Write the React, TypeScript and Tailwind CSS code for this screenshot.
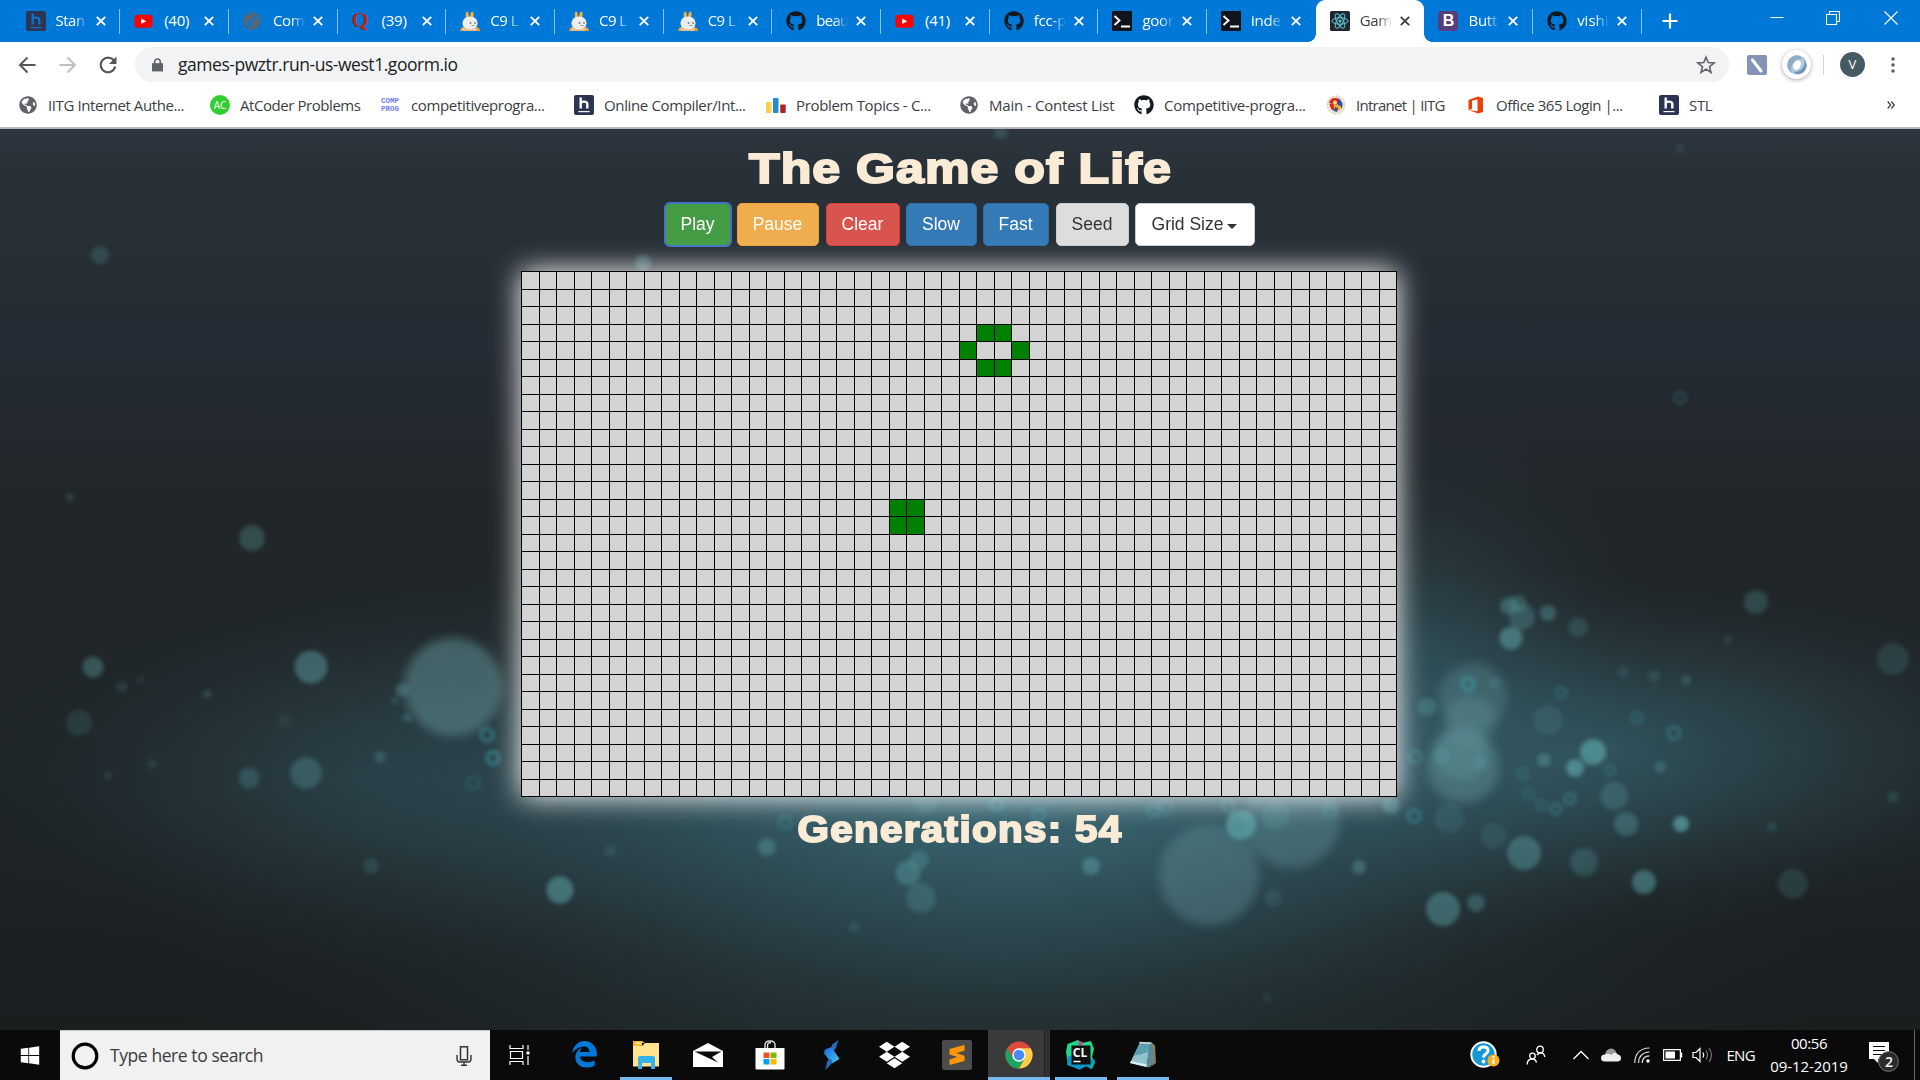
import { useLayoutEffect, useRef } from 'react';
import type { ReactNode } from 'react';
import { FaGithub, FaDropbox, FaWindows, FaGlobeAmericas } from 'react-icons/fa';

/* Text whose tracking is adjusted so that the run is `width` pixels wide. */
function FitText({ text, width, className = '' }: { text: string; width: number; className?: string }) {
  const ref = useRef<HTMLSpanElement>(null);
  useLayoutEffect(() => {
    const el = ref.current;
    if (!el) return;
    el.style.letterSpacing = '0px';
    const natural = el.offsetWidth;
    el.style.letterSpacing = `${(width - natural) / text.length}px`;
  }, [text, width]);
  return (
    <span ref={ref} className={`inline-block whitespace-pre ${className}`}>
      {text}
    </span>
  );
}

/* ---------- favicons ---------- */

const HackerEarth = () => (
  <svg viewBox="0 0 20 20" className="h-5 w-5">
    <rect width="20" height="20" rx="2" fill="#2c3454" />
    <path d="M6.700 2.500v11M6.700 9q0-2.400 3.300-2.400t3.300 2.400v4.500" fill="none" stroke="#fff" strokeWidth="2.400" />
    <path d="M4.500 16.600h11" stroke="#fff" strokeWidth="1.200" />
  </svg>
);
const HackerEarthDim = () => (
  <svg viewBox="0 0 20 20" className="h-5 w-5">
    <rect width="20" height="20" rx="2" fill="#2c3454" />
    <path d="M6.700 2.500v11M6.700 9q0-2.400 3.300-2.400t3.300 2.400v4.500" fill="none" stroke="#0c70c4" strokeWidth="2.400" />
    <path d="M4.500 16.600h11" stroke="#0c70c4" strokeWidth="1.200" />
  </svg>
);
const YouTube = () => (
  <svg viewBox="0 0 20 20" className="h-5 w-5">
    <rect x="0.500" y="3.700" width="18" height="13" rx="3" fill="#f00" />
    <path d="M7.200 7.400v5.600l5-2.800z" fill="#fff" />
  </svg>
);
const GlobeDim = () => (
  <svg viewBox="0 0 20 20" className="h-5 w-5">
    <circle cx="9" cy="10" r="8" fill="#2b6da8" stroke="#5d6670" strokeWidth="1.600" />
    <path d="M5 4.500q5-2 6 0l-2 3-3 1-1 3-3-1q0-4 3-6zM10 11l4-2 3 1-2 5-4 2-1-2z" fill="#5d6670" />
  </svg>
);
const GlobeGray = () => <FaGlobeAmericas className="ml-px h-[18px] w-[18px] text-[#5f6368]" />;
const Quora = () => (
  <span className="block h-5 w-5 font-['Liberation_Serif'] text-[22px] leading-[18px] font-bold text-[#b3261e]">Q</span>
);
const Rabbit = () => (
  <svg viewBox="0 0 20 20" className="h-5 w-5">
    <path d="M0 20q1-5 6-4l9 0q5 0 5 4z" fill="#f0a030" />
    <path d="M7 .5q2 0 2 7h-3q-1-6 1-7zM12.500 .5q2 1 .5 7h-3q0-7 2.500-7z" fill="#f5b040" />
    <ellipse cx="10" cy="12" rx="7.600" ry="6.600" fill="#eee" />
    <path d="M2 17q8 3.500 15 0l-1 2.500H3z" fill="#d8d4d0" />
    <circle cx="10.500" cy="12" r=".9" fill="#777" />
    <circle cx="15" cy="12" r=".9" fill="#777" />
    <path d="M11.500 14.500h3" stroke="#999" strokeWidth="1" />
  </svg>
);
const GitHub = () => <FaGithub className="h-5 w-5 text-[#14191f]" />;
const Terminal = () => (
  <svg viewBox="0 0 20 20" className="h-5 w-5">
    <rect width="20" height="20" rx="1" fill="#10151d" />
    <path d="M2.500 5l5 4.500-5 4.500M9 15.500h9" fill="none" stroke="#fff" strokeWidth="1.900" />
  </svg>
);
const ReactIcon = () => (
  <svg viewBox="0 0 20 20" className="h-5 w-5">
    <rect width="20" height="20" rx="1.500" fill="#20262b" />
    <g fill="none" stroke="#5fc9dd" strokeWidth="1">
      <ellipse cx="10" cy="10" rx="8" ry="3.200" />
      <ellipse cx="10" cy="10" rx="8" ry="3.200" transform="rotate(60 10 10)" />
      <ellipse cx="10" cy="10" rx="8" ry="3.200" transform="rotate(120 10 10)" />
    </g>
    <circle cx="10" cy="10" r="1.500" fill="#5fc9dd" />
  </svg>
);
const Bootstrap = () => (
  <span className="flex h-5 w-5 items-center justify-center rounded-[4px] bg-[#563d7c] font-['Liberation_Sans'] text-[16px] leading-none font-bold text-white">
    B
  </span>
);

type Tab = { title: string; width: number; icon: () => ReactNode; active?: boolean; noSep?: boolean };

const tabs: Tab[] = [
  { title: 'Stan', width: 29, icon: HackerEarthDim },
  { title: '(40)', width: 25, icon: YouTube },
  { title: 'Com', width: 31, icon: GlobeDim },
  { title: '(39)', width: 25, icon: Quora },
  { title: 'C9 L', width: 28, icon: Rabbit },
  { title: 'C9 L', width: 28, icon: Rabbit },
  { title: 'C9 L', width: 28, icon: Rabbit },
  { title: 'beau', width: 32, icon: GitHub },
  { title: '(41)', width: 25, icon: YouTube },
  { title: 'fcc-p', width: 32, icon: GitHub },
  { title: 'goor', width: 31, icon: Terminal },
  { title: 'inde', width: 30, icon: Terminal, noSep: true },
  { title: 'Gam', width: 32, icon: ReactIcon, active: true, noSep: true },
  { title: 'Butt', width: 29, icon: Bootstrap },
  { title: 'vishi', width: 31, icon: GitHub },
];

function TabItem({ tab }: { tab: Tab }) {
  const Icon = tab.icon;
  return (
    <div
      className={`relative flex h-[42px] w-[108.7px] shrink-0 items-center pl-3.5 ${
        tab.active ? 'rounded-t-[9px] bg-white text-[#3c4043]' : 'text-white'
      }`}
    >
      <Icon />
      <div
        className={`-mt-px ml-2.5 w-[36px] text-[15px] ${
          tab.title.startsWith('(') ? '' : '[mask-image:linear-gradient(to_right,#000_50%,transparent_90%)]'
        }`}
      >
        <FitText text={tab.title} width={tab.width} />
      </div>
      <svg viewBox="0 0 10 10" className="ml-[4px] h-[10px] w-[10px]">
        <path d="M.8.8l8.400 8.400M9.200.8L.8 9.200" stroke="currentColor" strokeWidth="1.900" />
      </svg>
      {!tab.noSep && <span className="absolute top-[9px] right-0 h-[25px] w-px bg-[#8cc2ef]" />}
      {tab.active && (
        <>
          <span className="absolute bottom-0 -left-2 h-2 w-2 bg-[radial-gradient(circle_at_0_0,transparent_7.500px,#fff_8px)]" />
          <span className="absolute -right-2 bottom-0 h-2 w-2 bg-[radial-gradient(circle_at_100%_0,transparent_7.500px,#fff_8px)]" />
        </>
      )}
    </div>
  );
}

function TabStrip() {
  return (
    <div className="flex h-[42px] items-center bg-[#0078d7] pl-[11.500px] text-white">
      {tabs.map((t, i) => (
        <TabItem key={i} tab={t} />
      ))}
      <svg viewBox="0 0 16 16" className="ml-5 h-4 w-4">
        <path d="M8 .5v15M.5 8h15" stroke="#fff" strokeWidth="2.200" />
      </svg>
      <div className="mr-[22px] ml-auto flex items-center gap-[42px] self-start pt-[11px]">
        <svg viewBox="0 0 14 14" className="h-3.5 w-3.5">
          <path d="M.5 6.500h13" stroke="#fff" />
        </svg>
        <svg viewBox="0 0 14 14" className="mr-0.5 h-3.5 w-3.5">
          <path d="M.5 3.500h10v10h-10zM3.500 3.500v-3h10v10h-3" fill="none" stroke="#fff" strokeWidth="1.100" />
        </svg>
        <svg viewBox="0 0 14 14" className="h-3.5 w-3.5">
          <path d="M.5.5l13 13M13.500.5l-13 13" stroke="#fff" strokeWidth="1.200" />
        </svg>
      </div>
    </div>
  );
}

function Toolbar() {
  return (
    <div className="flex h-[45px] items-center bg-white pl-[18px]">
      <svg viewBox="0 0 18 18" className="h-[18px] w-[18px]">
        <path d="M9.500 1.500L2 9l7.500 7.500M2 9h15.500" fill="none" stroke="#54585d" strokeWidth="2" />
      </svg>
      <svg viewBox="0 0 18 18" className="ml-[23px] h-[18px] w-[18px]">
        <path d="M8.500 1.500L16 9l-7.500 7.500M16 9H.5" fill="none" stroke="#bdc0c4" strokeWidth="2" />
      </svg>
      <svg viewBox="0 0 18 18" className="ml-[22px] h-[18px] w-[18px]">
        <path d="M15.200 5A7.300 7.300 0 1 0 16.200 10.500" fill="none" stroke="#54585d" strokeWidth="2.100" />
        <path d="M17.500 0.500v7.500h-7.500z" fill="#54585d" />
      </svg>
      <div className="ml-[18px] flex h-[35px] w-[1594px] items-center rounded-full bg-[#f1f3f4] pl-[17px] text-[17.5px] text-[#202124]">
        <svg viewBox="0 0 12 14" className="h-[14px] w-[11px]">
          <path d="M0 5h12v9H0z" fill="#5f6368" />
          <path d="M3 5.500V3.500a3 3 0 0 1 6 0v2" fill="none" stroke="#5f6368" strokeWidth="1.700" />
        </svg>
        <FitText text="games-pwztr.run-us-west1.goorm.io" width={280} className="ml-[15px]" />
        <svg viewBox="0 0 20 20" className="mr-[13px] ml-auto h-5 w-5">
          <path
            d="M10 2.200l2.200 5.400 5.800.4-4.500 3.700 1.500 5.700-5-3.200-5 3.200 1.500-5.700L2 8l5.800-.4z"
            fill="none"
            stroke="#5f6368"
            strokeWidth="1.600"
          />
        </svg>
      </div>
      <svg viewBox="0 0 20 20" className="ml-[18px] h-5 w-5">
        <rect width="20" height="20" rx="2" fill="#8394b8" />
        <path d="M5.500 5l8.500 11" stroke="#fff" strokeWidth="3" strokeLinecap="round" />
      </svg>
      <div className="ml-[15px] flex h-[29px] w-[29px] items-center justify-center rounded-full bg-white shadow-[0_1px_4px_rgba(0,0,0,0.35)]">
        <svg viewBox="0 0 20 20" className="h-5 w-5">
          <circle cx="10" cy="10" r="9.700" fill="#b4c9de" />
          <path d="M10 .3a9.700 9.700 0 0 0-5 18q-3-8 5-13.500Q13 3 16 4q-2.500-3.700-6-3.700z" fill="#8eabc8" />
          <path d="M15.500 2Q20 8 15 14q-4 4-9 2.500 4 4 9 1.800 5-3.300 4.500-9Q19 5 15.500 2z" fill="#6f94b9" />
          <ellipse cx="10" cy="10" rx="3.600" ry="5" fill="#fff" transform="rotate(25 10 10)" />
        </svg>
      </div>
      <span className="ml-[12px] h-5 w-px bg-[#d0d3d6]" />
      <span className="ml-[16px] flex h-[25px] w-[25px] items-center justify-center rounded-full bg-[#455a64] text-[13px] text-white">
        V
      </span>
      <svg viewBox="0 0 4 16" className="ml-[26px] h-4 w-1">
        <circle cx="2" cy="2" r="1.800" fill="#5f6368" />
        <circle cx="2" cy="8" r="1.800" fill="#5f6368" />
        <circle cx="2" cy="14" r="1.800" fill="#5f6368" />
      </svg>
    </div>
  );
}

const AtCoder = () => (
  <span className="flex h-5 w-5 items-center justify-center rounded-full bg-[#32cd32] text-[10px] text-white">AC</span>
);
const CompProg = () => (
  <span className="flex w-5 flex-col font-['Liberation_Mono'] text-[7.5px] leading-[8px] font-bold text-[#6f7df2]">
    <span>COMP</span>
    <span>PROG</span>
  </span>
);
const Codeforces = () => (
  <svg viewBox="0 0 20 20" className="h-5 w-5">
    <rect x="0" y="7" width="5.500" height="11" rx="1" fill="#f8cf4f" />
    <rect x="7" y="3" width="5.500" height="15" rx="1" fill="#1f8dd0" />
    <rect x="14.200" y="9.500" width="5.500" height="8.500" rx="1" fill="#b21f24" />
  </svg>
);
const Iitg = () => (
  <svg viewBox="0 0 20 20" className="h-5 w-5">
    <circle cx="10" cy="10" r="9" fill="#eee5cf" stroke="#c9c4b8" strokeDasharray="2 1.500" />
    <path d="M3 8q1-5 6-5 6 0 6 5l-5 2z" fill="#d6281f" />
    <path d="M12 3.500q6 3 4 10l-4-2z" fill="#2b4fa8" />
    <path d="M7 9l8 2q1 4-4 5-4 0-4-7z" fill="#f0b428" />
    <path d="M3.500 9l4 0 1 7q-4-1-5-7z" fill="#d6281f" />
    <path d="M9 12l3 1-1 4-3-1z" fill="#2b4fa8" />
    <circle cx="9" cy="7.500" r="2" fill="#f6dc88" />
  </svg>
);
const Office = () => (
  <svg viewBox="0 0 20 20" className="h-5 w-5">
    <path d="M2.500 5L12 1.400l5 1.500v14.200l-5 1.500L2.500 15l9 1.200V4.400L6 5.800v8l-3.500 1.400z" fill="#e8420c" />
  </svg>
);

const bookmarks: { text: string; width: number; slot: string; icon: () => ReactNode }[] = [
  { text: 'IITG Internet Authe...', width: 136, slot: 'w-[192px]', icon: GlobeGray },
  { text: 'AtCoder Problems', width: 121, slot: 'w-[171px]', icon: AtCoder },
  { text: 'competitiveprogra...', width: 134, slot: 'w-[193px]', icon: CompProg },
  { text: 'Online Compiler/Int...', width: 142, slot: 'w-[192px]', icon: HackerEarth },
  { text: 'Problem Topics - C...', width: 135, slot: 'w-[193px]', icon: Codeforces },
  { text: 'Main - Contest List', width: 125, slot: 'w-[175px]', icon: GlobeGray },
  { text: 'Competitive-progra...', width: 142, slot: 'w-[192px]', icon: GitHub },
  { text: 'Intranet | IITG', width: 89, slot: 'w-[140px]', icon: Iitg },
  { text: 'Office 365 Login |...', width: 127, slot: 'w-[193px]', icon: Office },
  { text: 'STL', width: 23, slot: 'w-[60px]', icon: HackerEarth },
];

function BookmarksBar() {
  return (
    <div className="flex h-[42px] items-center border-b-2 border-[#b5b8bb] bg-white pb-1 pl-[18px] text-[15px] text-[#3c4043]">
      {bookmarks.map((b, i) => {
        const Icon = b.icon;
        return (
          <div key={i} className={`flex shrink-0 items-center ${b.slot}`}>
            <span className="flex w-[30px] shrink-0">
              <Icon />
            </span>
            <FitText text={b.text} width={b.width} />
          </div>
        );
      })}
      <svg viewBox="0 0 8 8" className="mr-[25px] ml-auto h-2 w-2">
        <path d="M.7.5L3.600 4 .7 7.500M4.300.5L7.200 4 4.300 7.500" fill="none" stroke="#4a4d51" strokeWidth="1.400" />
      </svg>
    </div>
  );
}

/* ---------- bokeh backdrop: [cx, cy, r, opacity] ---------- */

const discs: [number, number, number, number][] = [
  [1509, 606, 9, 0.5], [1518, 604, 9, 0.4], [1522, 617, 13, 0.4], [1511, 638, 11.5, 0.7], [1548, 613, 8, 0.5],
  [1578, 627, 10, 0.28], [1756, 602, 12, 0.35], [1728, 640, 5, 0.18], [1893, 659, 16, 0.25], [1427, 707, 9.5, 0.4],
  [1548, 720, 15, 0.2], [1593, 752, 13, 0.85], [1575, 768, 9, 0.85], [1544, 760, 7, 0.5], [1660, 767, 6, 0.4],
  [1614, 796, 14, 0.35], [1626, 824, 12, 0.45], [1681, 824, 8, 0.9], [1772, 827, 5, 0.25], [1893, 797, 6, 0.25],
  [1449, 818, 15, 0.2], [1494, 836, 13, 0.2], [1524, 853, 17, 0.55], [1584, 862, 14, 0.35], [1644, 882, 12, 0.65],
  [1793, 884, 15, 0.25], [1443, 909, 17, 0.6], [1476, 903, 9, 0.45], [1391, 805, 9, 0.6], [1686, 680, 5, 0.35],
  [1654, 676, 6, 0.25], [1623, 672, 6, 0.2], [1495, 683, 6, 0.25], [70, 497, 4, 0.3], [252, 538, 13, 0.4],
  [93, 667, 10.5, 0.5], [311, 667, 16.5, 0.6], [79, 723, 13, 0.22], [402, 690, 7, 0.45], [395, 701, 4, 0.3],
  [407, 718, 5, 0.35], [306, 773, 16, 0.4], [249, 778, 10.5, 0.35], [380, 757, 6, 0.35], [207, 694, 4, 0.35],
  [122, 687, 6, 0.2], [141, 680, 5, 0.12], [152, 764, 5, 0.2], [108, 775, 4, 0.2], [371, 866, 8, 0.25],
  [560, 890, 13.5, 0.7], [610, 851, 6, 0.2], [767, 847, 9, 0.5], [285, 720, 7, 0.12], [1241, 825, 15, 0.9],
  [1091, 866, 9, 0.6], [1359, 867, 7, 0.5], [1273, 898, 9, 0.2], [908, 873, 12.5, 0.5], [919, 860, 10, 0.4],
  [921, 898, 15, 0.35], [854, 927, 6, 0.2], [1267, 998, 5, 0.15], [100, 255, 9, 0.3], [1680, 149, 4, 0.2],
  [1001, 132, 7, 0.3], [643, 263, 8, 0.5], [1480, 763, 7, 0.3], [1442, 756, 8, 0.3], [1276, 816, 14, 0.3],
  [925, 802, 12, 0.25],
];

const rings: [number, number, number, number][] = [
  [1468, 684, 6, 0.8], [1561, 693, 5, 0.4], [1637, 718, 5, 0.4], [1674, 733, 6, 0.55], [1523, 774, 5, 0.35],
  [1529, 794, 5, 0.3], [1541, 805, 5, 0.35], [1556, 809, 5, 0.5], [1570, 799, 5, 0.55], [1610, 770, 5, 0.35],
  [1414, 816, 6, 0.6], [1415, 757, 6, 0.5], [487, 735, 6, 0.7], [493, 758, 6, 0.8], [473, 783, 6, 0.3],
  [1680, 398, 5, 0.35], [1039, 815, 6, 0.5], [997, 804, 6, 0.6], [1154, 810, 6, 0.5], [1166, 807, 6, 0.4],
  [785, 822, 6, 0.4], [1330, 811, 6, 0.4], [1228, 806, 6, 0.5], [1004, 828, 5, 0.5],
];

function Backdrop() {
  return (
    <svg viewBox="0 129 1920 901" preserveAspectRatio="none" className="absolute inset-0 h-full w-full">
      <defs>
        <linearGradient id="base" x1="0" y1="0" x2="0" y2="1">
          <stop offset="0" stopColor="#2d363e" />
          <stop offset="0.05" stopColor="#283138" />
          <stop offset="0.25" stopColor="#252b34" />
          <stop offset="0.42" stopColor="#212629" />
          <stop offset="0.75" stopColor="#1e2427" />
          <stop offset="1" stopColor="#1b1e1f" />
        </linearGradient>
        <radialGradient id="glow">
          <stop offset="0" stopColor="#478d9f" stopOpacity="0.75" />
          <stop offset="0.3" stopColor="#43808f" stopOpacity="0.58" />
          <stop offset="0.55" stopColor="#3e7280" stopOpacity="0.34" />
          <stop offset="0.8" stopColor="#376773" stopOpacity="0.1" />
          <stop offset="1" stopColor="#2c5560" stopOpacity="0" />
        </radialGradient>
        <filter id="soft" x="-10%" y="-10%" width="120%" height="120%">
          <feGaussianBlur stdDeviation="2.300" />
        </filter>
        <filter id="softer" x="-10%" y="-30%" width="120%" height="160%">
          <feGaussianBlur stdDeviation="5" />
        </filter>
      </defs>
      <rect y="129" width="1920" height="901" fill="url(#base)" />
      <ellipse cx="980" cy="770" rx="960" ry="250" fill="url(#glow)" opacity="0.55" />
      <ellipse cx="1030" cy="795" rx="700" ry="210" fill="url(#glow)" opacity="0.6" />
      <ellipse cx="1600" cy="750" rx="520" ry="180" fill="url(#glow)" opacity="0.5" />
      <ellipse cx="370" cy="780" rx="420" ry="200" fill="url(#glow)" opacity="0.25" />
      <ellipse cx="1000" cy="960" rx="850" ry="260" fill="url(#glow)" opacity="0.3" />
      <ellipse cx="1400" cy="640" rx="260" ry="230" fill="url(#glow)" opacity="0.35" />
      <g filter="url(#softer)" fill="#62949a">
        <circle cx="453" cy="687" r="49" opacity="0.5" />
        <circle cx="1209" cy="875" r="50" opacity="0.38" />
        <circle cx="1292" cy="820" r="48" opacity="0.38" />
        <circle cx="1473" cy="697" r="34" opacity="0.33" />
        <circle cx="1470" cy="722" r="26" opacity="0.3" />
        <circle cx="1463" cy="767" r="36" opacity="0.45" />
        <circle cx="1461" cy="752" r="28" opacity="0.4" />
      </g>
      <g filter="url(#soft)" opacity="0.75">
        {discs.map(([x, y, r, o], i) => (
          <circle key={i} cx={x} cy={y} r={r} fill="#5fa9ad" opacity={o} />
        ))}
        {rings.map(([x, y, r, o], i) => (
          <circle key={i} cx={x} cy={y} r={r} fill="none" stroke="#3fa3ae" strokeWidth="3.500" opacity={o} />
        ))}
      </g>
    </svg>
  );
}

const COLS = 50;
const ROWS = 30;
const alive = new Set(['3-26', '3-27', '4-25', '4-28', '5-26', '5-27', '13-21', '13-22', '14-21', '14-22']);

function Board() {
  return (
    <div className="mt-[25px] mr-[2px] grid h-[526px] w-[876px] grid-cols-[repeat(50,17.5px)] grid-rows-[repeat(30,17.5px)] border-r border-b border-black bg-[#d3d3d3] shadow-[0_0_27px_#fff]">
      {Array.from({ length: ROWS * COLS }, (_, i) => {
        const on = alive.has(`${Math.floor(i / COLS)}-${i % COLS}`);
        return <div key={i} className={`border-t border-l border-black ${on ? 'bg-[#008000]' : ''}`} />;
      })}
    </div>
  );
}

function Game() {
  const btn = 'flex h-[43px] items-center justify-center rounded-[5px] border';
  const heading = "flex items-center font-['Liberation_Sans'] leading-none font-bold text-[#faebd7]";
  return (
    <main className="relative h-[901px] overflow-hidden bg-[#1d2225]">
      <Backdrop />
      <div className="relative flex flex-col items-center">
        <h1 className={`${heading} mt-[11px] h-[56px] text-[43px]`}>
          <FitText
            text="The Game of Life"
            width={363}
            className="scale-x-[1.165] [-webkit-text-stroke:2px_#faebd7]"
          />
        </h1>
        <div className="mt-[7px] mr-px flex font-['Liberation_Sans'] text-[17.5px] text-white">
          <button className={`${btn} w-[66px] border-[#2c6a2c] bg-[#449d44] outline-2 -outline-offset-1 outline-[#3f74c8]`}>Play</button>
          <button className={`${btn} ml-[6px] w-[82px] border-[#eea236] bg-[#f0ad4e]`}>Pause</button>
          <button className={`${btn} ml-[7px] w-[74px] border-[#d43f3a] bg-[#d9534f]`}>Clear</button>
          <button className={`${btn} ml-[6px] w-[71px] border-[#2e6da4] bg-[#337ab7]`}>Slow</button>
          <button className={`${btn} ml-[6px] w-[66px] border-[#2e6da4] bg-[#337ab7]`}>Fast</button>
          <button className={`${btn} ml-[7px] w-[73px] border-[#ccc] bg-[#ddd] text-[#333]`}>Seed</button>
          <button className={`${btn} ml-[6px] w-[120px] border-[#ccc] bg-white text-[#333]`}>
            Grid Size
            <span className="mt-1 ml-[4px] border-x-[5px] border-t-[5px] border-x-transparent border-t-[#333]" />
          </button>
        </div>
        <Board />
        <h2 className={`${heading} mt-[9px] h-[48px] text-[36px]`}>
          <FitText
            text="Generations: 54"
            width={290}
            className="scale-x-[1.12] [-webkit-text-stroke:1.900px_#faebd7]"
          />
        </h2>
      </div>
    </main>
  );
}

/* ---------- taskbar ---------- */

const Edge = () => (
  <svg viewBox="20 0 470 512" preserveAspectRatio="none" className="h-[27px] w-[25px]">
    <path
      d="M25.714 228.163c.111-.162.230-.323.342-.485-.021.162-.045.323-.065.485h-.277zm460.572 15.508c0-44.032-7.754-84.465-28.801-122.405C416.498 47.879 343.912.001 258.893.001 118.962-.724 40.617 113.214 26.056 227.679c42.429-61.312 117.073-121.376 220.375-124.966 0 0 109.666 0 99.419 104.957H169.997c6.369-37.386 18.554-58.986 34.339-78.926-75.048 34.900-121.850 96.096-120.742 188.315.830 71.448 50.124 144.836 120.743 171.976 83.357 31.847 192.776 7.200 240.132-21.324V363.307c-80.864 56.506-270.871 60.925-272.255-67.572h314.073v-52.064z"
      fill="#0078d7"
    />
  </svg>
);
const Explorer = () => (
  <svg viewBox="0 0 28 28" className="h-7 w-7">
    <path d="M1 0h9l3 2h-3v3H1z" fill="#f7b92d" />
    <path d="M4 1.500h5v1.500H4z" fill="#fff1c4" />
    <path d="M1 5h9l3-3h14v23.500H1z" fill="#ffe391" />
    <path d="M6 28V17q0-2 2-2h13q2 0 2 2v11h-4v-6h-9v6z" fill="#35b3ea" />
  </svg>
);
const Mail = () => (
  <svg viewBox="0 0 30 24" className="h-6 w-[30px]">
    <path d="M0 8L15 0l15 8v16H0z" fill="#fff" />
    <path d="M1.500 8.500h27L19 14l6 5.500z" fill="#0a0a0a" />
  </svg>
);
const Store = () => (
  <svg viewBox="0 0 30 30" className="h-[30px] w-[30px]">
    <path d="M10 8V5q0-4 5-4t5 4v3M12.500 8V5.500q0-3 3.500-3" fill="none" stroke="#ddd" strokeWidth="1.400" />
    <path d="M.5 8h29v20.500q0 1-1 1h-27q-1 0-1-1z" fill="#fff" />
    <path d="M8.500 12.500h6v5.500h-6z" fill="#f25022" />
    <path d="M15.500 12.500h6v5.500h-6z" fill="#7fba00" />
    <path d="M8.500 19h6v5.500h-6z" fill="#00a4ef" />
    <path d="M15.500 19h6v5.500h-6z" fill="#ffb900" />
  </svg>
);
const Bolt = () => (
  <svg viewBox="0 0 18 30" className="h-[30px] w-[18px]">
    <defs>
      <linearGradient id="bolt" x1="0" y1="0" x2="1" y2="1">
        <stop offset="0" stopColor="#1b62d8" />
        <stop offset="1" stopColor="#45cdf8" />
      </linearGradient>
    </defs>
    <path d="M15.500 0L9 4.500q-1.500 4 0 8.500l4-5q1-4 2.500-8z" fill="#2a68b8" />
    <path d="M8.500 7L2 9.500q-1.500 2-.5 4.500l7.500 9.500 7.500-4.500z" fill="url(#bolt)" />
    <path d="M9.500 21.500l-2-3L4 21.500Q3.500 26 2 30l4-3.500q2.500-2 3.500-5z" fill="#2a68b8" />
  </svg>
);
const Sublime = () => (
  <svg viewBox="0 0 30 30" className="h-[30px] w-[30px]">
    <rect width="30" height="30" rx="2" fill="#4b4b4b" />
    <path d="M22.500 5v5.500l-8 2.700 8 2.500V21L7.500 25v-5.500l8-2.500-8-2.500V9z" fill="#ff9800" />
  </svg>
);
const Chrome = () => (
  <svg viewBox="0 0 28 28" className="h-7 w-7">
    <circle cx="14" cy="14" r="13.500" fill="#dd4b3e" />
    <path d="M2.300 7.250A13.500 13.500 0 0 0 14 27.500L19.850 17.400 14 20.700 8.150 17.400z" fill="#1da462" />
    <path d="M14 27.500A13.500 13.500 0 0 0 25.700 7.250H14L19.850 17.400z" fill="#ffcd46" />
    <circle cx="14" cy="14" r="6.700" fill="#fff" />
    <circle cx="14" cy="14" r="5.300" fill="#4a8af4" />
  </svg>
);
const CLion = () => (
  <span className="relative flex h-[30px] w-[30px]">
    <svg viewBox="0 0 30 30" className="h-[30px] w-[30px]">
      <path d="M1.500 4L12 0l4 3 9-2 3 8-2 8 3 5-3 7-6-3-7 3.500L2 24 0 12z" fill="#21d789" />
      <path d="M17 17l12 3-4 9-5-3-6 3.500L1 25l1-9z" fill="#0897c8" />
      <path d="M12 1l5 1-3 6z" fill="#d43f8d" />
      <rect x="5.500" y="5.500" width="19" height="19" fill="#111" />
      <path d="M7.500 21.500h7" stroke="#fff" strokeWidth="1.500" />
    </svg>
    <span className="absolute top-[6px] left-[7px] font-['Open_Sans'] text-[12px] leading-[13px] font-bold text-white">CL</span>
  </span>
);
const Notepad = () => (
  <svg viewBox="0 0 28 28" className="h-7 w-7">
    <path d="M22 2l4 2 1 18-4 3z" fill="#a07a45" />
    <path d="M12 1.500h11l2.500 20.500-5 4.500z" fill="#3d5560" />
    <path d="M11 1.500L21 1l-3.500 25L1 22z" fill="#8fc3cf" />
    <path d="M11 1.500L21 1l-1.300 10L5 15z" fill="#5aa0b2" />
    <path d="M21 1.500l3 1 1.500 19.500-6 4.500-2 -.5z" fill="#5f8792" />
    <path d="M1 22l16.500 4 .5-2.500L2 20z" fill="#d9edf0" />
    <path d="M10.500 .8l12 .8-.2 1.500-12-.6z" fill="#cfd6d8" />
  </svg>
);

const apps: { icon: () => ReactNode; state?: 'open' | 'active' }[] = [
  { icon: Edge },
  { icon: Explorer, state: 'open' },
  { icon: Mail },
  { icon: Store },
  { icon: Bolt },
  { icon: () => <FaDropbox className="h-[32px] w-[31px] text-white" /> },
  { icon: Sublime },
  { icon: Chrome, state: 'active' },
  { icon: CLion, state: 'open' },
  { icon: Notepad, state: 'open' },
];

function Taskbar() {
  return (
    <div className="flex h-[50px] bg-[#0a0a0a] text-white">
      <div className="flex w-[60px] items-center justify-center">
        <FaWindows className="h-[21px] w-[20px]" />
      </div>
      <div className="flex w-[430px] items-center border-t border-[#c8c8c8] bg-[#f1f1f1] pl-[11px] text-[17.5px] text-[#3c3c3c]">
        <svg viewBox="0 0 28 28" className="h-7 w-7">
          <circle cx="14" cy="14" r="11.800" fill="none" stroke="#000" strokeWidth="3.200" />
        </svg>
        <FitText text="Type here to search" width={153} className="ml-[11px]" />
        <svg viewBox="0 0 16 20" className="mr-[18px] ml-auto h-5 w-4">
          <rect x="4.500" y=".8" width="7" height="13" fill="none" stroke="#333" strokeWidth="1.500" />
          <path d="M1 9v4q0 3 3 3h8q3 0 3-3V9M8 16v3M5 19.200h6" fill="none" stroke="#333" strokeWidth="1.400" />
        </svg>
      </div>
      <div className="flex w-[63px] items-center pl-[19px]">
        <svg viewBox="0 0 22 20" className="h-5 w-[22px]">
          <path d="M1 0v3.500h13V0M1 20v-3.500h13V20M1.500 6.500h12v7h-12zM19 0v5M19 11v9" fill="none" stroke="#fff" strokeWidth="1.200" />
          <path d="M17.500 6.500h3v3h-3z" fill="#fff" />
        </svg>
      </div>
      {apps.map((a, i) => {
        const Icon = a.icon;
        return (
          <div
            key={i}
            className={`flex w-[62.1px] shrink-0 flex-col items-center ${a.state === 'active' ? 'bg-[linear-gradient(to_right,#3a3a3a_56px,#222_56px,#222_57px,#303030_57px)]' : ''}`}
          >
            <span className="flex h-[47px] items-center pt-[2px]">
              <Icon />
            </span>
            {a.state && <span className={`h-[3px] bg-[#76b9ed] ${a.state === 'active' ? 'w-full' : 'w-[52px]'}`} />}
          </div>
        );
      })}
      <div className="ml-auto flex items-center">
        <svg viewBox="0 0 30 28" className="h-7 w-[30px]">
          <circle cx="13.500" cy="13.500" r="12.200" fill="#1798d6" stroke="#fff" strokeWidth="2" />
          <path d="M9 10q0-4 4.500-4t4.500 3.500q0 2-2.500 3.700-2 1.300-2 3.300" fill="none" stroke="#fff" strokeWidth="3" />
          <circle cx="13.500" cy="20.500" r="1.900" fill="#fff" />
          <circle cx="23.500" cy="19.500" r="6" fill="#f9b01e" />
          <path d="M23.500 18v5M23.500 15v1.800" stroke="#fff" strokeWidth="2" />
        </svg>
        <svg viewBox="0 0 20 20" className="ml-[26px] h-5 w-5">
          <g fill="none" stroke="#fff" strokeWidth="1.300">
            <circle cx="14" cy="4.500" r="3.300" />
            <circle cx="6.500" cy="11" r="2.800" />
            <path d="M1.200 19.500q0-5.500 5-5.500 3.500 0 4.300 3.500M11 10q3-3.500 6-1.500 1.500 1 1.800 3.500" />
          </g>
        </svg>
        <svg viewBox="0 0 16 10" className="ml-[27px] h-2.5 w-4">
          <path d="M.5 9L8 1.500 15.500 9" fill="none" stroke="#fff" strokeWidth="1.300" />
        </svg>
        <svg viewBox="0 0 20 14" className="ml-[12px] h-3.5 w-5">
          <path d="M4 8Q4 1 10 .5q4 0 5.500 4.500L10 9z" fill="#9a9a9a" />
          <path d="M4 13.500q-4 0-4-3.500t4-3.500q3-1.500 6 .5 4-4 7-.5 3 .5 3 3.500t-3 3.500z" fill="#eee" />
        </svg>
        <svg viewBox="0 0 16 16" className="ml-[13px] h-4 w-4">
          <path d="M.8 16Q1 1.500 15.500 1M4.500 16q.3-10.500 11-11M8.200 16q.2-7 7.300-7.200" fill="none" stroke="#ddd" strokeWidth="1.200" />
          <circle cx="14" cy="14" r="1.700" fill="#fff" />
        </svg>
        <svg viewBox="0 0 20 12" className="ml-[13px] h-3 w-5">
          <path d="M.6.6h16.800v10.800H.6z" fill="none" stroke="#fff" strokeWidth="1.200" />
          <path d="M2.500 2.500h9.500v7H2.500zM18 3.500h1.200v5H18z" fill="#fff" />
        </svg>
        <svg viewBox="0 0 21 18" className="ml-[9px] h-[18px] w-[21px]">
          <path d="M1 6.500h3L8 2.500v13l-4-4H1z" fill="none" stroke="#fff" strokeWidth="1.200" />
          <path d="M11 6.500q1.500 2.500 0 5" fill="none" stroke="#fff" strokeWidth="1.200" />
          <path d="M14 4.500q3 4.500 0 9M17 2q5 7 0 14" fill="none" stroke="#777" strokeWidth="1.200" />
        </svg>
        <FitText text="ENG" width={29} className="ml-[13px] text-[15px]" />
        <div className="ml-[15px] flex w-[78px] flex-col items-center text-[15px] leading-[23px]">
          <FitText text="00:56" width={36} />
          <FitText text="09-12-2019" width={77} />
        </div>
        <div className="relative ml-[21px] h-[34px] w-[32px]">
          <svg viewBox="0 0 32 34" className="h-[34px] w-8">
            <path d="M0 4h20v17H9l0 4-4-4H0z" fill="#fff" />
            <path d="M4 8.500h12M4 12.500h12M4 16.500h8" stroke="#0a0a0a" strokeWidth="1.200" />
            <circle cx="19.500" cy="23.500" r="9.900" fill="#2b2b2b" stroke="#777" />
          </svg>
          <span className="absolute top-[15px] left-[10px] w-[20px] text-center text-[14px] leading-[17px] font-semibold">2</span>
        </div>
        <span className="ml-[13px] h-[50px] w-px bg-[#666]" />
        <span className="w-[5px]" />
      </div>
    </div>
  );
}

export default function App() {
  return (
    <div className="h-[1080px] w-[1920px] overflow-hidden font-['Open_Sans',sans-serif]">
      <TabStrip />
      <Toolbar />
      <BookmarksBar />
      <Game />
      <Taskbar />
    </div>
  );
}
